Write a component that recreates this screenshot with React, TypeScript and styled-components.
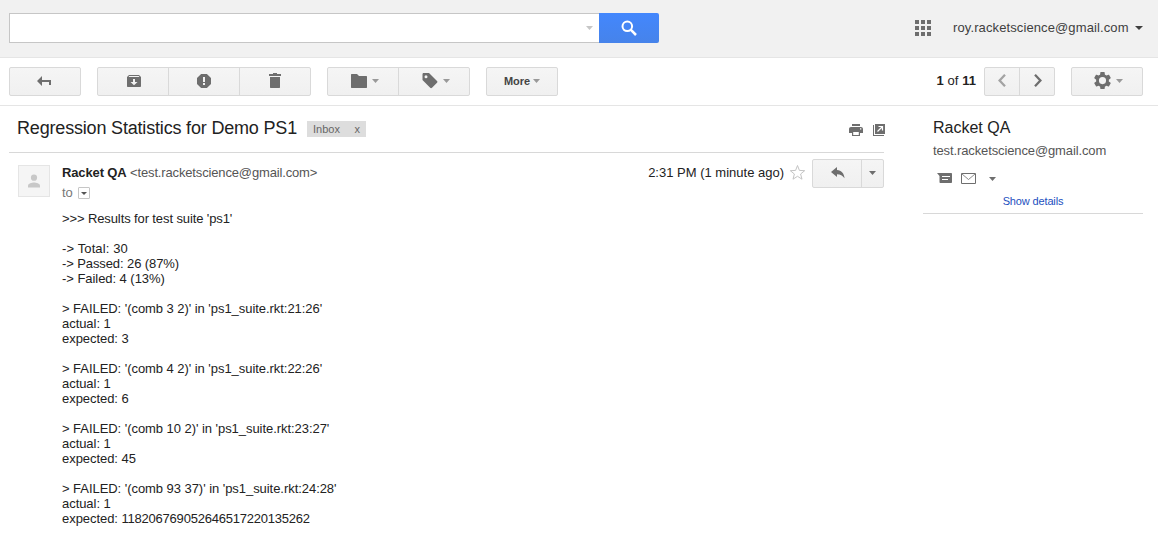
import React from 'react';
import styled, { createGlobalStyle } from 'styled-components';

const GlobalStyle = createGlobalStyle`
  body {
    margin: 0;
    background: #fff;
    color: #222;
    font-family: "Liberation Sans", Arial, sans-serif;
    font-size: 13px;
    line-height: 15px;
    overflow: hidden;
  }
  * { box-sizing: border-box; }
  svg { display: block; flex: none; }
`;

const Page = styled.div`
  width: 1158px;
  height: 548px;
  display: flex;
  flex-direction: column;
`;

const Header = styled.header`
  height: 58px;
  padding: 13px 15px 0 9px;
  display: flex;
  align-items: flex-start;
  background: #f1f1f1;
  border-bottom: 1px solid #e5e5e5;
`;

const SearchField = styled.div`
  width: 590px;
  height: 30px;
  padding: 0 6px 1px 0;
  display: flex;
  align-items: center;
  justify-content: flex-end;
  background: #fff;
  border: 1px solid #c6c6c6;
  border-right: 0;
`;

const SearchButton = styled.div`
  width: 60px;
  height: 30px;
  display: flex;
  align-items: center;
  justify-content: center;
  border-radius: 0 2px 2px 0;
  background: linear-gradient(#4387fd, #4683ea);
`;

const Account = styled.div`
  margin-left: auto;
  height: 30px;
  display: flex;
  align-items: center;
  color: #404040;
`;

const AccountName = styled.span`
  width: 182px;
  margin: -2px 0 0 22px;
  letter-spacing: 0.11px;
`;

const Toolbar = styled.div`
  height: 48px;
  padding: 9px 15px 0 9px;
  display: flex;
  gap: 16px;
  border-bottom: 1px solid #e5e5e5;
`;

const ButtonGroup = styled.div`
  height: 29px;
  display: flex;
  border: 1px solid #d9d9d9;
  border-radius: 2px;
  background: linear-gradient(#f5f5f5, #f0f0f0);
`;

const ToolButton = styled.div<{ $w: number; $inset?: number }>`
  width: ${(p) => p.$w}px;
  padding: 0 0 1px ${(p) => p.$inset ?? 0}px;
  display: flex;
  align-items: center;
  justify-content: center;
  gap: 5px;
  & + & { border-left: 1px solid #d9d9d9; }
`;

const MoreLabel = styled.span`
  font-size: 11px;
  font-weight: bold;
  color: #444;
  margin: 1px -2px 0 0;
  letter-spacing: -0.1px;
`;

const Count = styled.div`
  margin-left: auto;
  padding-top: 6px;
  margin-right: -8px;
  letter-spacing: 0.05px;
`;

const Columns = styled.main`
  display: flex;
  padding-left: 9px;
`;

const Thread = styled.section`
  width: 875px;
`;

const SubjectRow = styled.div`
  height: 47px;
  padding: 0 0 0 8px;
  display: flex;
  align-items: flex-start;
  border-bottom: 1px solid #d8d8d8;
`;

const Subject = styled.h1`
  margin: 12px 0 0;
  width: 282px;
  font-size: 18px;
  line-height: 21px;
  font-weight: normal;
  letter-spacing: -0.18px;
  white-space: nowrap;
`;

const Chip = styled.div`
  width: 59px;
  height: 16px;
  margin: 15px 0 0 8px;
  padding: 0 6px;
  display: flex;
  justify-content: space-between;
  background: #ddd;
  color: #666;
  font-size: 11px;
  line-height: 16px;
`;

const SubjectActions = styled.div`
  margin: 18px -1px 0 auto;
  display: flex;
  gap: 10px;
`;

const Message = styled.article`
  display: flex;
  padding: 6px 0 0 9px;
`;

const Avatar = styled.div`
  width: 32px;
  height: 32px;
  margin-top: 6px;
  display: flex;
  align-items: center;
  justify-content: center;
  background: #f5f5f5;
  border: 1px solid #e5e5e5;
`;

const MessageMain = styled.div`
  flex: 1;
  margin-left: 12px;
`;

const MessageHead = styled.div`
  height: 26px;
  display: flex;
  align-items: flex-start;
`;

const Sender = styled.div`
  padding-top: 6px;
  color: #555;
  letter-spacing: -0.15px;
  b { color: #222; letter-spacing: -0.13px; }
`;

const Time = styled.div`
  margin-left: auto;
  padding-top: 6px;
`;

const StarSlot = styled.div`
  margin: 5px 6px 0 5px;
`;

const ToRow = styled.div`
  display: flex;
  gap: 5px;
  color: #777;
`;

const ToMenu = styled.div`
  width: 12px;
  height: 12px;
  margin-top: 2px;
  display: flex;
  align-items: center;
  justify-content: center;
  border: 1px solid #c6c6c6;
  border-radius: 1px;
`;

const Body = styled.div`
  padding-top: 11px;
`;

const Line = styled.div<{ $ls?: number }>`
  height: 15px;
  white-space: pre;
  letter-spacing: ${(p) => p.$ls ?? -0.05}px;
`;

const LongNumber = styled.span`
  letter-spacing: -0.22px;
`;

const ContactCard = styled.aside`
  width: 220px;
  height: 108px;
  margin-left: 39px;
  padding: 12px 0 0 10px;
  border-bottom: 1px solid #d8d8d8;
`;

const ContactName = styled.div`
  font-size: 16px;
  line-height: 20px;
`;

const ContactMail = styled.div`
  margin-top: 5px;
  color: #555;
  letter-spacing: -0.12px;
`;

const ContactActions = styled.div`
  height: 12px;
  margin: 15px 0 0 4px;
  display: flex;
  align-items: flex-start;
  gap: 9px;
`;

const ContactMenu = styled.div`
  padding: 4px 0 0 4px;
`;

const Details = styled.div`
  margin: 9px 10px 0 0;
  text-align: center;
  font-size: 11px;
  line-height: 14px;
  letter-spacing: -0.14px;
  color: #1c4fc0;
`;

const Caret = ({ color = '#999' }: { color?: string }) => (
  <svg width="7" height="4" viewBox="0 0 7 4">
    <path d="M0 0h7L3.5 4z" fill={color} />
  </svg>
);

const report: { text: string; ls?: number; number?: string }[] = [
  { text: ">>> Results for test suite 'ps1'", ls: -0.11 },
  { text: '' },
  { text: '-> Total: 30', ls: 0.12 },
  { text: '-> Passed: 26 (87%)', ls: -0.1 },
  { text: '-> Failed: 4 (13%)' },
  { text: '' },
  { text: "> FAILED: '(comb 3 2)' in 'ps1_suite.rkt:21:26'" },
  { text: 'actual: 1' },
  { text: 'expected: 3' },
  { text: '' },
  { text: "> FAILED: '(comb 4 2)' in 'ps1_suite.rkt:22:26'" },
  { text: 'actual: 1' },
  { text: 'expected: 6' },
  { text: '' },
  { text: "> FAILED: '(comb 10 2)' in 'ps1_suite.rkt:23:27'" },
  { text: 'actual: 1' },
  { text: 'expected: 45' },
  { text: '' },
  { text: "> FAILED: '(comb 93 37)' in 'ps1_suite.rkt:24:28'" },
  { text: 'actual: 1' },
  { text: 'expected: ', number: '118206769052646517220135262' },
];

export default function App() {
  return (
    <Page>
      <GlobalStyle />
      <Header>
        <SearchField><Caret color="#c6c6c6" /></SearchField>
        <SearchButton>
          <svg width="16" height="16" viewBox="0 0 16 16" fill="none" stroke="#fff">
            <circle cx="6.300" cy="6.300" r="4.8" strokeWidth="2" />
            <path d="M9.700 9.700l5.300 5.300" strokeWidth="2.500" />
          </svg>
        </SearchButton>
        <Account>
          <svg width="16" height="16" viewBox="0 0 16 16" fill="#6e6e6e">
            <path d="M0 0h4v4H0zM6 0h4v4H6zM12 0h4v4h-4zM0 6h4v4H0zM6 6h4v4H6zM12 6h4v4h-4zM0 12h4v4H0zM6 12h4v4H6zM12 12h4v4h-4z" />
          </svg>
          <AccountName>roy.racketscience@gmail.com</AccountName>
          <svg width="8" height="4" viewBox="0 0 8 4"><path d="M0 0h8L4 4z" fill="#404040" /></svg>
        </Account>
      </Header>

      <Toolbar>
        <ButtonGroup>
          <ToolButton $w={70}>
            <svg width="16" height="10" viewBox="0 0 16 10" fill="#6e6e6e">
              <path d="M0 5l5-5v4h9v5h-2V6H5v4z" />
            </svg>
          </ToolButton>
        </ButtonGroup>
        <ButtonGroup>
          <ToolButton $w={70} $inset={2}>
            <svg width="14" height="14" viewBox="0 0 14 14" fill="#6e6e6e">
              <path fillRule="evenodd" d="M2 1h10l2 2v9c0 .6-.4 1-1 1H1c-.6 0-1-.4-1-1V3zM2.300 2l-.8 1h11l-.8-1zM6 5v3H3.500L7 11.300 10.500 8H8V5z" />
            </svg>
          </ToolButton>
          <ToolButton $w={71}>
            <svg width="14" height="14" viewBox="0 0 14 14" fill="#6e6e6e">
              <path fillRule="evenodd" d="M4.100 0h5.800L14 4.100v5.800L9.900 14H4.100L0 9.900V4.100zM6 3v5h2V3zM6 9v2h2V9z" />
            </svg>
          </ToolButton>
          <ToolButton $w={71}>
            <svg width="12" height="16" viewBox="0 0 12 16" fill="#6e6e6e">
              <path d="M0 1h4V0h4v1h4v2H0zM1 4h10v10.500l-.5.5h-9l-.5-.5z" />
            </svg>
          </ToolButton>
        </ButtonGroup>
        <ButtonGroup>
          <ToolButton $w={70} $inset={4}>
            <svg width="16" height="14" viewBox="0 0 16 14" fill="#6e6e6e">
              <path d="M.5 0H6l2 2h7.500l.5.5v11l-.5.5H.500l-.5-.5V.5z" />
            </svg>
            <Caret />
          </ToolButton>
          <ToolButton $w={71} $inset={4}>
            <svg width="16" height="16" viewBox="0 0 16 16" fill="#6e6e6e">
              <path fillRule="evenodd" d="M1.500 0H7l8 8c.6.600.6 1.200 0 1.800l-5 5c-.6.600-1.200.600-1.800 0L.5 7V1.500C.5.600.8 0 1.500 0zM4 2.200a1.500 1.500 0 1 0 0 3 1.500 1.500 0 0 0 0-3z" />
            </svg>
            <Caret />
          </ToolButton>
        </ButtonGroup>
        <ButtonGroup>
          <ToolButton $w={70}><MoreLabel>More</MoreLabel><Caret /></ToolButton>
        </ButtonGroup>
        <Count><b>1</b> of <b>11</b></Count>
        <ButtonGroup>
          <ToolButton $w={34}>
            <svg width="8" height="14" viewBox="0 0 8 14" fill="none" stroke="#a3a3a3" strokeWidth="2.300">
              <path d="M7 .8L1.600 6.500 7 12.200" />
            </svg>
          </ToolButton>
          <ToolButton $w={35} $inset={1}>
            <svg width="8" height="14" viewBox="0 0 8 14" fill="none" stroke="#6e6e6e" strokeWidth="2.300">
              <path d="M1 .8l5.400 5.700L1 12.200" />
            </svg>
          </ToolButton>
        </ButtonGroup>
        <ButtonGroup>
          <ToolButton $w={70} $inset={2}>
            <svg width="17" height="18" viewBox="2 2 20 21" fill="#6e6e6e">
              <path fillRule="evenodd" d="M19.430 12.980c.04-.32.070-.64.070-.98s-.03-.66-.07-.98l2.110-1.650c.190-.15.240-.42.120-.64l-2-3.460c-.12-.22-.39-.3-.61-.22l-2.490 1c-.52-.4-1.080-.73-1.690-.98l-.38-2.650C14.460 2.180 14.250 2 14 2h-4c-.25 0-.46.180-.49.420l-.38 2.650c-.61.250-1.170.590-1.690.980l-2.490-1c-.23-.09-.49 0-.61.220l-2 3.460c-.13.220-.07.490.120.640l2.110 1.650c-.04.320-.07.650-.07.980s.030.660.070.980l-2.110 1.650c-.19.150-.24.420-.12.640l2 3.460c.120.220.390.300.610.220l2.490-1c.520.400 1.080.730 1.690.980l.380 2.650c.030.240.240.420.490.420h4c.250 0 .460-.18.490-.42l.380-2.650c.610-.25 1.170-.59 1.690-.98l2.490 1c.230.090.490 0 .610-.22l2-3.460c.120-.22.070-.49-.12-.64zM12 16.200a4.200 4.200 0 1 1 0-8.400 4.200 4.200 0 0 1 0 8.400z" />
            </svg>
            <Caret />
          </ToolButton>
        </ButtonGroup>
      </Toolbar>

      <Columns>
        <Thread>
          <SubjectRow>
            <Subject>Regression Statistics for Demo PS1</Subject>
            <Chip><span>Inbox</span><span>x</span></Chip>
            <SubjectActions>
              <svg width="14" height="12" viewBox="0 0 14 12" fill="#6e6e6e">
                <path d="M3 0h8v2H3z" />
                <path fillRule="evenodd" d="M2 3h10c1.100 0 2 .9 2 2v4h-3V7H3v2H0V5c0-1.100.9-2 2-2zM11 4.300v1.200h1.300V4.300z" />
                <path fillRule="evenodd" d="M3 7h8v5H3zM4.200 8v3h5.600V8z" />
              </svg>
              <svg width="12" height="12" viewBox="0 0 12 12" fill="#6e6e6e">
                <path d="M0 1h1v10h10v1H0z" />
                <path d="M2 0h10v10H2z" />
                <path d="M5.500 2.500h4v4M9.500 2.500L4.500 7.500" stroke="#fff" strokeWidth="1.200" fill="none" />
              </svg>
            </SubjectActions>
          </SubjectRow>
          <Message>
            <Avatar>
              <svg width="12" height="14" viewBox="0 0 12 14" fill="#c8c8c8">
                <circle cx="6" cy="3.700" r="3.100" />
                <path d="M0 13.500v-2c0-2 4-3 6-3s6 1 6 3v2z" />
              </svg>
            </Avatar>
            <MessageMain>
              <MessageHead>
                <Sender><b>Racket QA</b> &lt;test.racketscience@gmail.com&gt;</Sender>
                <Time>2:31 PM (1 minute ago)</Time>
                <StarSlot>
                  <svg width="17" height="17" viewBox="0 0 17 17" fill="#fff" stroke="#c4c4c4">
                    <path d="M8.500 1.500l1.900 4.900 5.300.3-4.100 3.300 1.400 5.200-4.500-2.900L4 15.200 5.400 10 1.300 6.700l5.300-.3z" />
                  </svg>
                </StarSlot>
                <ButtonGroup>
                  <ToolButton $w={48} $inset={2}>
                    <svg width="14" height="12" viewBox="0 0 14 12" fill="#6e6e6e">
                      <path d="M0 5L6 0v3c4.500.4 7 3.200 7.500 8.300C11.500 8.300 9.500 7.300 6 7.200V10z" />
                    </svg>
                  </ToolButton>
                  <ToolButton $w={22}><Caret color="#6e6e6e" /></ToolButton>
                </ButtonGroup>
              </MessageHead>
              <ToRow>to <ToMenu><svg width="6" height="3" viewBox="0 0 6 3"><path d="M0 0h6L3 3z" fill="#555" /></svg></ToMenu></ToRow>
              <Body>
                {report.map((line, i) => (
                  <Line key={i} $ls={line.ls}>
                    {line.text}
                    {line.number && <LongNumber>{line.number}</LongNumber>}
                  </Line>
                ))}
              </Body>
            </MessageMain>
          </Message>
        </Thread>
        <ContactCard>
          <ContactName>Racket QA</ContactName>
          <ContactMail>test.racketscience@gmail.com</ContactMail>
          <ContactActions>
            <svg width="15" height="12" viewBox="0 0 15 12" fill="#6e6e6e">
              <path fillRule="evenodd" d="M0 0h14c.6 0 1 .4 1 1v8c0 .6-.4 1-1 1H3.500c-.6 0-1-.4-1-1V3zM5 3v1h8V3zM5 6v1h6V6z" />
            </svg>
            <svg width="15" height="11" viewBox="0 0 15 11" fill="none" stroke="#6e6e6e">
              <path d="M.5.5h14v10H.5z" />
              <path d="M1 1l6.500 5.500L14 1" strokeWidth=".8" />
            </svg>
            <ContactMenu><Caret color="#6e6e6e" /></ContactMenu>
          </ContactActions>
          <Details>Show details</Details>
        </ContactCard>
      </Columns>
    </Page>
  );
}
